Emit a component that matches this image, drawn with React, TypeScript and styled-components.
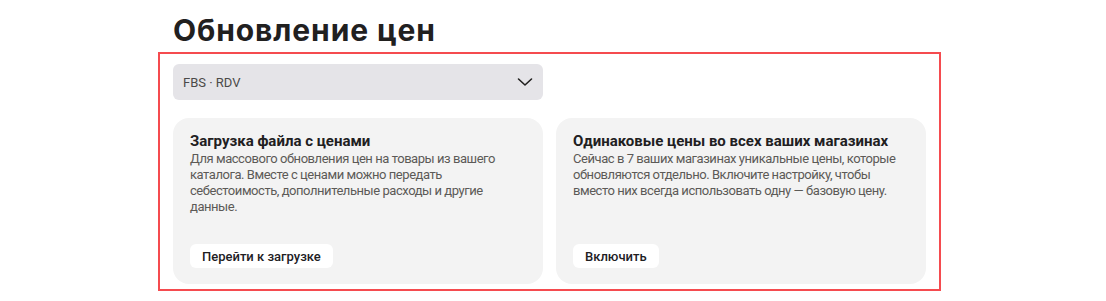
import styled, { createGlobalStyle } from 'styled-components';

const GlobalStyle = createGlobalStyle`
  body {
    margin: 0;
    background: #ffffff;
    font-family: Roboto, "Noto Sans", sans-serif;
    color: #21201f;
  }
`;

const cards = [
  {
    title: 'Загрузка файла с ценами',
    text: 'Для массового обновления цен на товары из вашего каталога. Вместе с ценами можно передать себестоимость, дополнительные расходы и другие данные.',
    action: 'Перейти к загрузке',
  },
  {
    title: 'Одинаковые цены во всех ваших магазинах',
    text: 'Сейчас в 7 ваших магазинах уникальные цены, которые обновляются отдельно. Включите настройку, чтобы вместо них всегда использовать одну — базовую цену.',
    action: 'Включить',
  },
];

function App() {
  return (
    <Page>
      <GlobalStyle />
      <Title>Обновление цен</Title>
      <Frame>
        <Select>
          <SelectValue>FBS · RDV</SelectValue>
          <svg width="16" height="16" viewBox="0 0 16 16" fill="none">
            <path d="M1.5 5 L8 11 L14.5 5" stroke="#21201f" strokeWidth="1.6" strokeLinecap="round" strokeLinejoin="round" />
          </svg>
        </Select>
        {cards.map((c) => (
          <Card key={c.title}>
            <CardTitle>{c.title}</CardTitle>
            <CardText>{c.text}</CardText>
            <Action>{c.action}</Action>
          </Card>
        ))}
      </Frame>
    </Page>
  );
}

const Page = styled.div`
  padding: 12px 0 0 158px;
`;

const Title = styled.h1`
  margin: 0 0 4px 15px;
  font-family: Inter, "Noto Sans", sans-serif;
  font-size: 30px;
  line-height: 36px;
  font-weight: 700;
  letter-spacing: 0.9px;
  color: #21201f;
`;

const Frame = styled.div`
  width: 783px;
  height: 239px;
  box-sizing: border-box;
  border: 2px solid #f54b4f;
  padding: 10px 13px 0;
  display: grid;
  grid-template-columns: 370px 370px;
  grid-template-rows: 36px 166px;
  column-gap: 13px;
  row-gap: 18px;
  align-content: start;
`;

const Select = styled.div`
  grid-column: 1;
  grid-row: 1;
  display: flex;
  align-items: center;
  justify-content: space-between;
  padding: 0 10px;
  background: #e5e4e8;
  border-radius: 6px;
`;

const SelectValue = styled.span`
  font-size: 13px;
  color: #4b4a49;
`;

const Card = styled.div`
  grid-row: 2;
  display: flex;
  flex-direction: column;
  align-items: flex-start;
  padding: 13px 17px 16px;
  background: #f3f3f3;
  border-radius: 16px;
  box-sizing: border-box;
`;

const CardTitle = styled.div`
  font-size: 15px;
  line-height: 20px;
  font-weight: 700;
  color: #21201f;
`;

const CardText = styled.div`
  font-size: 13px;
  line-height: 16px;
  letter-spacing: -0.45px;
  color: #5c5a57;
  max-width: 330px;
`;

const Action = styled.button`
  margin-top: auto;
  height: 24px;
  padding: 0 12px;
  border: none;
  border-radius: 6px;
  background: #ffffff;
  font-family: inherit;
  font-size: 13px;
  font-weight: 500;
  color: #21201f;
`;

export default App;
